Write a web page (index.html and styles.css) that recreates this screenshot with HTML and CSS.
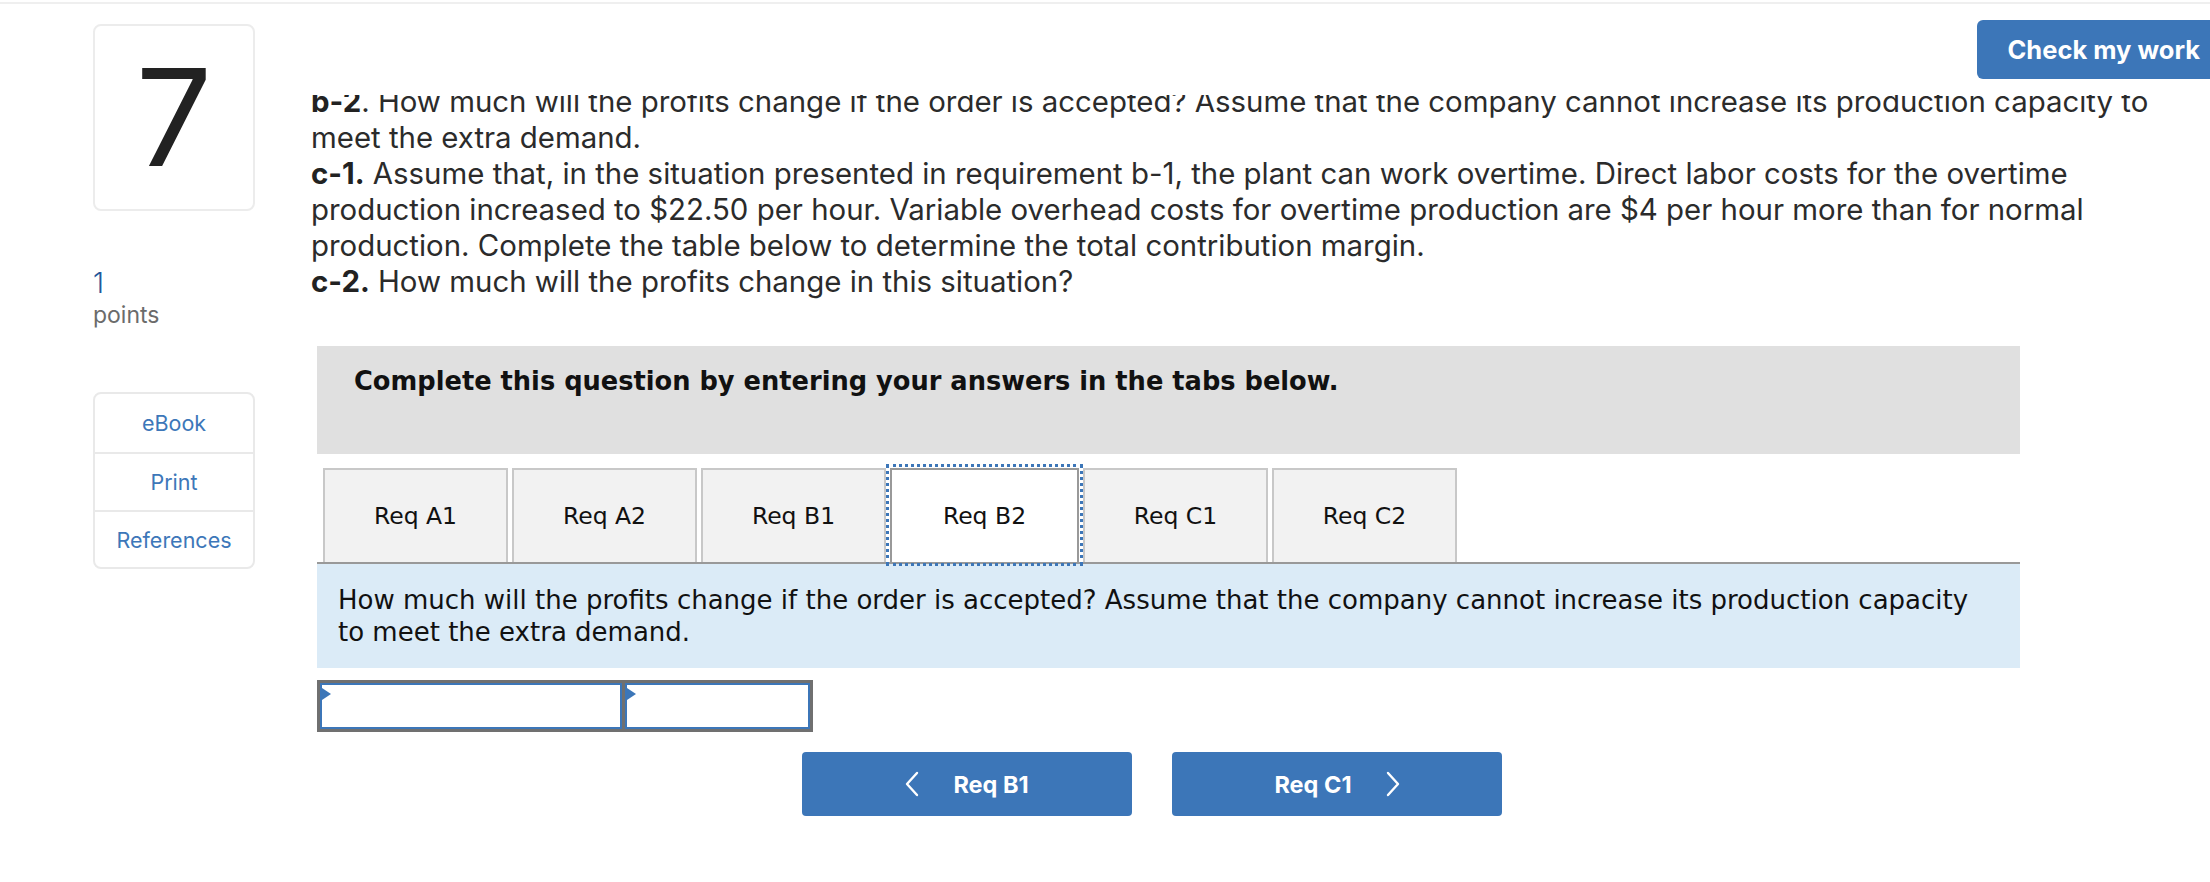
FILE: index.html
```html
<!DOCTYPE html>
<html lang="en">
<head>
<meta charset="utf-8">
<title>Question 7</title>
<link rel="stylesheet" href="styles.css">
</head>
<body>
<div class="topbar"></div>
<div class="page">
  <aside class="sidebar">
    <div class="qnum">7</div>
    <div class="points">
      <div class="pts-val">1</div>
      <div class="pts-lbl">points</div>
    </div>
    <ul class="links">
      <li>eBook</li>
      <li>Print</li>
      <li>References</li>
    </ul>
  </aside>
  <main class="main">
    <div class="toolbar"><button class="check">Check my work</button></div>
    <div class="qscroll">
      <div class="qtext">
        <p><b>b-2</b>. How much will the profits change if the order is accepted? Assume that the company cannot increase its production capacity to meet the extra demand.</p>
        <p><b>c-1.</b> Assume that, in the situation presented in requirement b-1, the plant can work overtime. Direct labor costs for the overtime production increased to $22.50 per hour. Variable overhead costs for overtime production are $4 per hour more than for normal production. Complete the table below to determine the total contribution margin.</p>
        <p><b>c-2.</b> How much will the profits change in this situation?</p>
      </div>
    </div>
    <section class="work">
      <div class="instr">Complete this question by entering your answers in the tabs below.</div>
      <div class="tabs">
        <div class="tab">Req A1</div>
        <div class="tab">Req A2</div>
        <div class="tab">Req B1</div>
        <div class="tab active">Req B2</div>
        <div class="tab">Req C1</div>
        <div class="tab">Req C2</div>
      </div>
      <div class="desc"><p>How much will the profits change if the order is accepted? Assume that the company cannot increase its production capacity to meet the extra demand.</p></div>
      <div class="answer">
        <div class="cell wide"><span class="flag"></span></div>
        <div class="cell narrow"><span class="flag"></span></div>
      </div>
      <div class="nav">
        <button class="navbtn"><svg class="chev" viewBox="0 0 14 26" width="14" height="26"><polyline points="12,2 2,13 12,24" fill="none" stroke="#fff" stroke-width="2.4" stroke-linecap="round" stroke-linejoin="round"/></svg><span>Req B1</span></button>
        <button class="navbtn"><span>Req C1</span><svg class="chev" viewBox="0 0 14 26" width="14" height="26"><polyline points="2,2 12,13 2,24" fill="none" stroke="#fff" stroke-width="2.4" stroke-linecap="round" stroke-linejoin="round"/></svg></button>
      </div>
    </section>
  </main>
</div>
</body>
</html>
```

FILE: styles.css
```css
* { box-sizing: border-box; }
html, body { margin: 0; padding: 0; }
body {
  width: 2210px;
  height: 882px;
  overflow: hidden;
  background: #fff;
  font-family: Inter, Roboto, "Liberation Sans", sans-serif;
  color: #2b2b2b;
}
.topbar { height: 4px; border-top: 2px solid #fff; background: #efefef; }
.page { display: flex; padding-left: 93px; }
.sidebar { width: 162px; flex: none; padding-top: 20px; }
.qnum {
  height: 187px;
  border: 2px solid #ececec;
  border-radius: 8px;
  display: flex;
  align-items: center;
  justify-content: center;
  font-size: 135px;
  line-height: 1;
  color: #222;
}
.points { margin-top: 57px; }
.pts-val { font-size: 28px; line-height: 30px; color: #24579a; font-weight: 300; }
.pts-lbl { margin-top: 2px; font-size: 23px; line-height: 30px; color: #6b6b6b; }
.links {
  list-style: none;
  margin: 62px 0 0;
  padding: 0;
  border: 2px solid #e9e9e9;
  border-radius: 8px;
}
.links li {
  height: 58px;
  display: flex;
  align-items: center;
  justify-content: center;
  font-size: 21.5px;
  color: #3d77b9;
  border-top: 2px solid #e9e9e9;
}
.links li:first-child { border-top: 0; height: 58px; }
.links li:last-child { height: 57px; }
.main { margin-left: 56px; width: 1919px; flex: none; }
.toolbar { display: flex; justify-content: flex-end; padding-top: 16px; }
.check {
  height: 59px;
  padding: 0 30px;
  border: 0;
  border-radius: 6px 0 0 6px;
  background: #3c76b8;
  color: #fff;
  font-family: Inter, sans-serif;
  font-weight: 700;
  font-size: 25.5px;
}
.qscroll { margin-top: 16px; height: 214px; overflow: hidden; }
.qtext { margin-top: -11px; width: 1865px; font-size: 29.4px; line-height: 36px; }
.qtext p { margin: 0; }
.qtext b { font-weight: 700; color: #222; }
.work { margin-left: 6px; width: 1703px; font-family: "DejaVu Sans", Verdana, sans-serif; color: #111; }
.instr {
  margin-top: 37px;
  height: 108px;
  background: #e0e0e0;
  padding: 20px 37px 0;
  font-weight: 700;
  font-size: 25.7px;
  line-height: 30px;
}
.tabs {
  display: flex;
  gap: 4px;
  margin-top: 14px;
  padding-left: 6px;
  border-bottom: 2px solid #999;
}
.tab {
  width: 185px;
  height: 94px;
  background: #f2f2f2;
  border: 2px solid #c8c8c8;
  border-bottom: 0;
  display: flex;
  align-items: center;
  justify-content: center;
  font-size: 23.5px;
  color: #111;
}
.tab.active { background: #fff; border-color: #999; outline: 3px dotted #3c76b8; outline-offset: 1px; width: 189px; }
.desc { background: #dbebf7; padding: 20px 21px 20px; min-height: 104px; }
.desc p { margin: 0; max-width: 1645px; font-size: 26px; line-height: 32px; color: #111; }
.answer { display: flex; width: 496px; margin-top: 12px; border: 3px solid #707070; background: #707070; gap: 3px; }
.cell { position: relative; height: 46px; background: #fff; border: 2px solid #3c76b8; }
.cell.wide { width: 302px; }
.cell.narrow { flex: 1; }
.flag {
  position: absolute;
  left: 0; top: 3px;
  width: 0; height: 0;
  border-top: 6px solid transparent;
  border-bottom: 6px solid transparent;
  border-left: 9px solid #3c76b8;
}
.nav { display: flex; gap: 40px; margin-top: 20px; padding-left: 485px; }
.navbtn {
  width: 330px;
  height: 64px;
  border: 0;
  border-radius: 4px;
  background: #3c76b8;
  color: #fff;
  display: flex;
  align-items: center;
  justify-content: center;
  gap: 34px;
  font-family: Inter, sans-serif;
  font-weight: 700;
  font-size: 23.5px;
}
```
